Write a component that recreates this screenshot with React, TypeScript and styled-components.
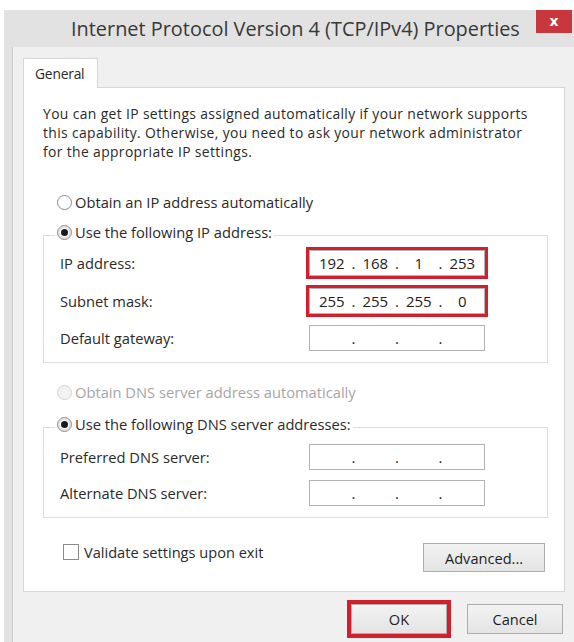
import React from "react";
import styled, { createGlobalStyle } from "styled-components";

const GlobalStyle = createGlobalStyle`
  html, body { margin: 0; padding: 0; background: #ffffff; }
  body {
    font-family: "Open Sans", "Noto Sans", "Liberation Sans", sans-serif;
    color: #262626;
  }
  * { box-sizing: border-box; }
`;

const Window = styled.div`
  margin: 10px 0 0 4px;
  width: 570px;
  height: 632px;
  background: #e2e2e2;
  display: flex;
  flex-direction: column;
  overflow: hidden;
`;

const TitleBar = styled.div`
  height: 37px;
  flex: none;
  display: flex;
  align-items: center;
`;

const Title = styled.div`
  margin-left: 67px;
  font-size: 19.9px;
  color: #383838;
  white-space: nowrap;
`;

const CloseButton = styled.div`
  margin-left: auto;
  margin-right: 2px;
  align-self: flex-start;
  margin-top: -1px;
  width: 36px;
  height: 24px;
  background: #c8363e;
  color: #ffffff;
  display: flex;
  align-items: center;
  justify-content: center;
  font-family: "DejaVu Sans", sans-serif;
  font-size: 14px;
  font-weight: 700;
`;

const Client = styled.div`
  flex: 1;
  margin-left: 8px;
  border-left: 1px solid #cbcbcb;
  background: #f0f0f0;
  padding: 11px 9px 0 10px;
  display: flex;
  flex-direction: column;
`;

const TabStrip = styled.div`
  display: flex;
  position: relative;
  z-index: 1;
`;

const Tab = styled.div`
  width: 75px;
  height: 30px;
  background: #ffffff;
  border: 1px solid #d6d6d6;
  border-bottom: none;
  padding-left: 11px;
  display: flex;
  align-items: center;
  font-size: 13.8px;
  letter-spacing: -0.2px;
  color: #2a2a2a;
`;

const Panel = styled.div`
  margin-top: -1px;
  height: 505px;
  background: #ffffff;
  border: 1px solid #d6d6d6;
  padding: 16px 16px 0 19px;
  display: flex;
  flex-direction: column;
`;

const Intro = styled.p`
  margin: 0;
  font-size: 13.9px;
  letter-spacing: 0.36px;
  line-height: 19px;
  color: #2a2a2a;
  white-space: nowrap;
`;

const RadioRow = styled.label<{ $top?: number; $disabled?: boolean }>`
  display: flex;
  align-items: center;
  gap: 3px;
  height: 18px;
  margin-top: ${(p) => p.$top ?? 0}px;
  padding-left: ${(p) => (p.$top !== undefined ? 14 : 0)}px;
  font-size: 14.7px;
  color: ${(p) => (p.$disabled ? "#a6a6a6" : "#2a2a2a")};
  white-space: nowrap;
`;

const RadioCircle = styled.span<{ $checked?: boolean; $disabled?: boolean }>`
  flex: none;
  width: 15px;
  height: 15px;
  border-radius: 50%;
  border: 1px solid ${(p) => (p.$disabled ? "#d2d2d2" : "#8a8a8a")};
  background: ${(p) => (p.$disabled ? "#f2f2f2" : "#ffffff")};
  box-shadow: ${(p) => (p.$checked ? "inset 0 0 0 2px #e2e2e2" : "none")};
  display: flex;
  align-items: center;
  justify-content: center;
  &::after {
    content: "";
    width: 7px;
    height: 7px;
    border-radius: 50%;
    background: #1a1a1a;
    display: ${(p) => (p.$checked ? "block" : "none")};
  }
`;

const GroupBox = styled.fieldset<{ $top: number; $padTop: number }>`
  margin: ${(p) => p.$top}px 0 0 0;
  min-width: 0;
  border: 1px solid #dddddd;
  padding: ${(p) => p.$padTop}px 0 11px 0;
`;

const GroupLegend = styled.legend`
  margin-left: 11px;
  padding: 0 2px 6px;
`;

const Rows = styled.div<{ $gap: number }>`
  display: flex;
  flex-direction: column;
  gap: ${(p) => p.$gap}px;
`;

const FieldRow = styled.div`
  height: 26px;
  display: flex;
  align-items: center;
  justify-content: space-between;
  padding: 0 62px 0 16px;
  font-size: 14.7px;
  color: #2a2a2a;
  white-space: nowrap;
`;

const IpField = styled.div<{ $highlighted?: boolean }>`
  width: 176px;
  height: 26px;
  border: 1px solid #b3b3b3;
  background: #ffffff;
  display: flex;
  align-items: center;
  font-size: 15px;
  color: #222222;
  outline: ${(p) => (p.$highlighted ? "3px solid #d11f2e" : "none")};
`;

const Segment = styled.span`
  flex: 1;
  text-align: center;
`;

const Dot = styled.span`
  width: 0;
  display: flex;
  justify-content: center;
`;

const BottomRow = styled.div`
  margin-top: 25px;
  display: flex;
  justify-content: space-between;
  align-items: flex-start;
  padding: 0 3px 0 20px;
`;

const CheckRow = styled.label`
  display: flex;
  align-items: center;
  gap: 5px;
  height: 17px;
  font-size: 14.6px;
  color: #2a2a2a;
  white-space: nowrap;
`;

const CheckBox = styled.span`
  flex: none;
  width: 16px;
  height: 16px;
  border: 1px solid #8a8a8a;
  background: #ffffff;
`;

const Button = styled.div<{ $width: number; $height: number; $highlighted?: boolean }>`
  width: ${(p) => p.$width}px;
  height: ${(p) => p.$height}px;
  border: 1px solid #adadad;
  background: linear-gradient(#f2f2f2, #e4e4e4);
  display: flex;
  align-items: center;
  justify-content: center;
  font-size: 14.6px;
  color: #1e1e1e;
  outline: ${(p) => (p.$highlighted ? "4px solid #d11f2e" : "none")};
`;

const ButtonRow = styled.div`
  margin-top: 12px;
  display: flex;
  justify-content: flex-end;
  gap: 20px;
  padding-right: 2px;
`;

type Ip = [string, string, string, string];

const IpInput: React.FC<{ value?: Ip; highlighted?: boolean }> = ({ value = ["", "", "", ""], highlighted }) => (
  <IpField $highlighted={highlighted}>
    <Segment>{value[0]}</Segment>
    <Dot>.</Dot>
    <Segment>{value[1]}</Segment>
    <Dot>.</Dot>
    <Segment>{value[2]}</Segment>
    <Dot>.</Dot>
    <Segment>{value[3]}</Segment>
  </IpField>
);

export default function App() {
  return (
    <>
      <GlobalStyle />
      <Window>
        <TitleBar>
          <Title>Internet Protocol Version 4 (TCP/IPv4) Properties</Title>
          <CloseButton>x</CloseButton>
        </TitleBar>
        <Client>
          <TabStrip>
            <Tab>General</Tab>
          </TabStrip>
          <Panel>
            <Intro>
              You can get IP settings assigned automatically if your network supports
              <br />
              this capability. Otherwise, you need to ask your network administrator
              <br />
              for the appropriate IP settings.
            </Intro>

            <RadioRow $top={32}>
              <RadioCircle />
              Obtain an IP address automatically
            </RadioRow>

            <GroupBox $top={12} $padTop={3}>
              <GroupLegend>
                <RadioRow>
                  <RadioCircle $checked />
                  Use the following IP address:
                </RadioRow>
              </GroupLegend>
              <Rows $gap={11.5}>
                <FieldRow>
                  IP address:
                  <IpInput value={["192", "168", "1", "253"]} highlighted />
                </FieldRow>
                <FieldRow>
                  Subnet mask:
                  <IpInput value={["255", "255", "255", "0"]} highlighted />
                </FieldRow>
                <FieldRow>
                  Default gateway:
                  <IpInput />
                </FieldRow>
              </Rows>
            </GroupBox>

            <RadioRow $top={20} $disabled>
              <RadioCircle $disabled />
              Obtain DNS server address automatically
            </RadioRow>

            <GroupBox $top={14} $padTop={5}>
              <GroupLegend>
                <RadioRow>
                  <RadioCircle $checked />
                  Use the following DNS server addresses:
                </RadioRow>
              </GroupLegend>
              <Rows $gap={10}>
                <FieldRow>
                  Preferred DNS server:
                  <IpInput />
                </FieldRow>
                <FieldRow>
                  Alternate DNS server:
                  <IpInput />
                </FieldRow>
              </Rows>
            </GroupBox>

            <BottomRow>
              <CheckRow>
                <CheckBox />
                Validate settings upon exit
              </CheckRow>
              <Button $width={122} $height={29}>Advanced...</Button>
            </BottomRow>
          </Panel>
          <ButtonRow>
            <Button $width={96} $height={30} $highlighted>OK</Button>
            <Button $width={96} $height={30}>Cancel</Button>
          </ButtonRow>
        </Client>
      </Window>
    </>
  );
}
